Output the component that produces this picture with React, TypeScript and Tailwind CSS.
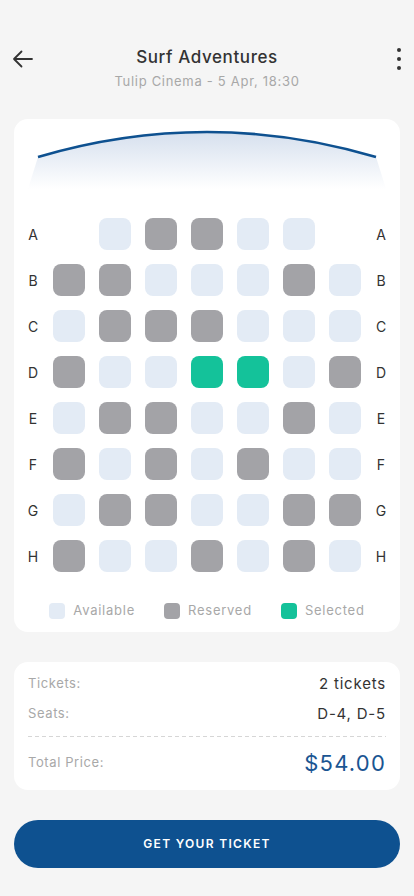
import React from "react";

type S = "A" | "R" | "S" | "_";
const rows: [string, S[]][] = [
  ["A", ["_", "A", "R", "R", "A", "A", "_"]],
  ["B", ["R", "R", "A", "A", "A", "R", "A"]],
  ["C", ["A", "R", "R", "R", "A", "A", "A"]],
  ["D", ["R", "A", "A", "S", "S", "A", "R"]],
  ["E", ["A", "R", "R", "A", "A", "R", "A"]],
  ["F", ["R", "A", "R", "A", "R", "A", "A"]],
  ["G", ["A", "R", "R", "A", "A", "R", "R"]],
  ["H", ["R", "A", "A", "R", "A", "R", "A"]],
];

function Seat({ s }: { s: S }) {
  if (s === "_") return <div className="w-[32px] h-[32px]" />;
  const cls =
    s === "A" ? "bg-[#e3ebf5]" : s === "R" ? "bg-[#a3a3a7]" : "bg-[#14c29a]";
  return <div className={`w-[32px] h-[32px] rounded-[8px] ${cls}`} />;
}

export default function App() {
  return (
    <div
      className="w-[414px] h-[896px] bg-[#f5f5f5] flex flex-col px-[14px] overflow-hidden"
      style={{ fontFamily: "Inter, 'Noto Sans', sans-serif" }}
    >
      {/* Header */}
      <div className="relative flex flex-col items-center pt-[45px] h-[119px]">
        <div className="absolute left-[-3px] top-[47px]">
          <svg width="24" height="24" viewBox="0 0 24 24" fill="none" stroke="#333" strokeWidth="1.8" strokeLinecap="round" strokeLinejoin="round">
            <path d="M21 12H3M10.5 4.5L3 12l7.5 7.5" />
          </svg>
        </div>
        <div className="absolute right-[-1px] top-[48px] flex flex-col gap-[5px] items-center">
          <div className="w-[4px] h-[4px] rounded-full bg-[#333]" />
          <div className="w-[4px] h-[4px] rounded-full bg-[#333]" />
          <div className="w-[4px] h-[4px] rounded-full bg-[#333]" />
        </div>
        <div className="text-[17px] leading-[24px] font-medium text-[#333] tracking-[0.6px]">
          Surf Adventures
        </div>
        <div className="text-[13px] leading-[18px] text-[#a8a8a8] tracking-[0.7px] mt-[3px]">
          Tulip Cinema - 5 Apr, 18:30
        </div>
      </div>

      {/* Seat card */}
      <div className="bg-white rounded-[14px] h-[513px] flex flex-col">
        <svg width="386" height="72" viewBox="0 0 386 72" className="block">
          <defs>
            <linearGradient id="g" x1="0" y1="0" x2="0" y2="1">
              <stop offset="0" stopColor="#d6e0ee" />
              <stop offset="1" stopColor="#ffffff" />
            </linearGradient>
          </defs>
          <path d="M24 38 Q193 -12 362 38 L372 70 L14 70 Z" fill="url(#g)" />
          <path d="M24 38 Q193 -12 362 38" fill="none" stroke="#0e5190" strokeWidth="2.6" />
        </svg>
        <div className="mt-[27px] flex flex-col gap-[14px]">
          {rows.map(([label, seats]) => (
            <div key={label} className="flex items-center pl-[10px]">
              <div className="w-[18px] text-center text-[14px] text-[#333]">{label}</div>
              <div className="ml-[11px] flex gap-[14px]">
                {seats.map((s, i) => (
                  <Seat key={i} s={s} />
                ))}
              </div>
              <div className="ml-[11px] w-[18px] text-center text-[14px] text-[#333]">{label}</div>
            </div>
          ))}
        </div>
        <div className="mt-[29px] flex justify-center gap-[29px] text-[13px] text-[#a8a8a8] tracking-[0.75px]">
          <div className="flex items-center gap-[8px]">
            <div className="w-[16px] h-[16px] rounded-[4px] bg-[#e3ebf5]" />
            <span>Available</span>
          </div>
          <div className="flex items-center gap-[8px]">
            <div className="w-[16px] h-[16px] rounded-[4px] bg-[#a3a3a7]" />
            <span>Reserved</span>
          </div>
          <div className="flex items-center gap-[8px]">
            <div className="w-[16px] h-[16px] rounded-[4px] bg-[#14c29a]" />
            <span>Selected</span>
          </div>
        </div>
      </div>

      {/* Summary card */}
      <div className="mt-[30px] bg-white rounded-[14px] h-[128px] px-[14px] pt-[12px] flex flex-col">
        <div className="flex justify-between items-center h-[20px]">
          <span className="text-[13px] text-[#a8a8a8] tracking-[0.6px]">Tickets:</span>
          <span className="text-[15px] text-[#333] tracking-[0.8px]">2 tickets</span>
        </div>
        <div className="flex justify-between items-center h-[20px] mt-[10px]">
          <span className="text-[13px] text-[#a8a8a8] tracking-[0.6px]">Seats:</span>
          <span className="text-[15px] text-[#333] tracking-[0.8px]">D-4, D-5</span>
        </div>
        <div className="mt-[12px] h-[1px] bg-[repeating-linear-gradient(90deg,#d6d6d6_0_4px,transparent_4px_7px)]" />
        <div className="flex justify-between items-center h-[30px] mt-[11px]">
          <span className="text-[13px] text-[#a8a8a8] tracking-[0.6px]">Total Price:</span>
          <span className="text-[22px] text-[#1a5592] tracking-[1.2px]">$54.00</span>
        </div>
      </div>

      {/* Button */}
      <button className="mt-[30px] h-[48px] w-full rounded-full bg-[#0e5190] text-white text-[12px] font-semibold tracking-[1.3px]">
        GET YOUR TICKET
      </button>
    </div>
  );
}
